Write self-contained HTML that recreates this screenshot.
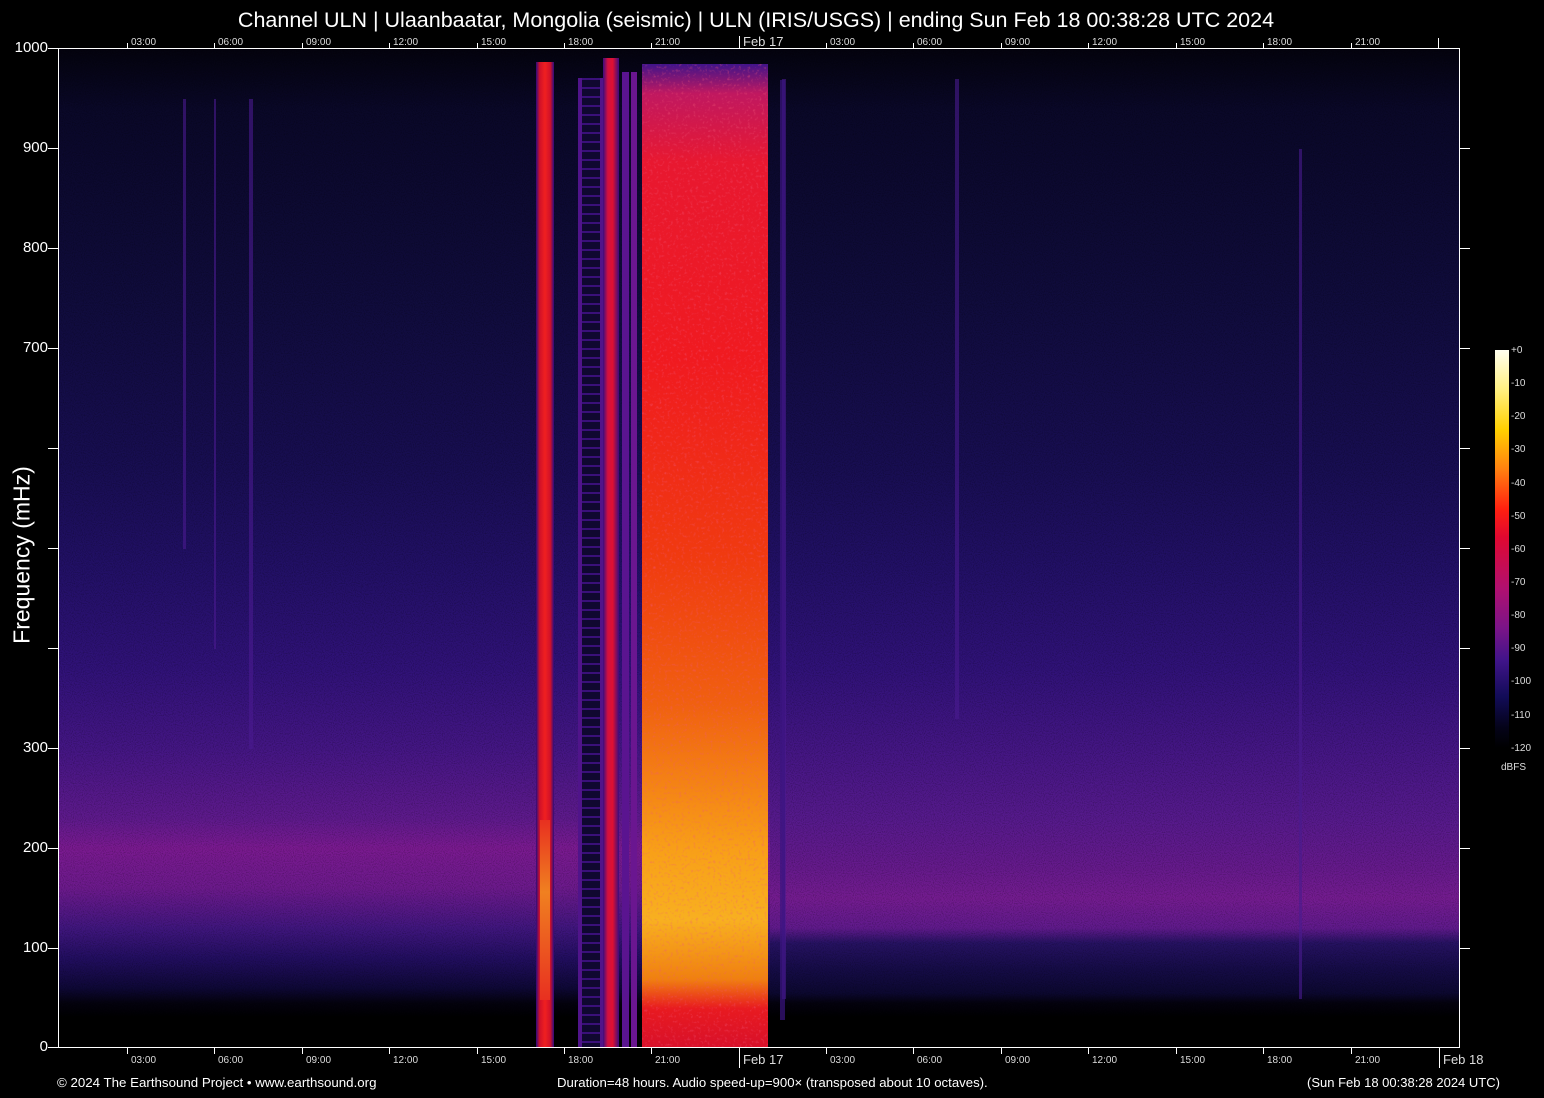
<!DOCTYPE html>
<html><head><style>
*{margin:0;padding:0}
body{width:1544px;height:1098px;background:#000;position:relative;overflow:hidden;font-family:"Liberation Sans",sans-serif;color:#fff}
.a{position:absolute}
.t{position:absolute;font-size:10px;color:#ddd}
.yl{position:absolute;font-size:15px;color:#fff;text-align:right;width:48px;left:0}
.cl{position:absolute;left:1511px;font-size:10px;color:#ddd}
</style></head><body>
<div class="a" style="left:0;top:8px;width:1512px;text-align:center;font-size:21.5px;white-space:nowrap">Channel ULN | Ulaanbaatar, Mongolia (seismic) | ULN (IRIS/USGS) | ending Sun Feb 18 00:38:28 UTC 2024</div>

<div class="a" style="left:59px;top:49px;width:711px;height:999px;background:linear-gradient(#04030e 0%,#0a0828 6%,#100c3c 25%,#180e52 42%,#221066 52%,#301278 62%,#441684 70%,#5e1a8c 77%,#7a1a90 80%,#6c1a8c 84%,#40167e 88%,#220e60 91%,#0e0836 94%,#04020e 95.5%,#000 97%,#000 100%)"></div>
<div class="a" style="left:770px;top:49px;width:689px;height:999px;background:linear-gradient(#04030e 0%,#0a0828 6%,#100c3c 25%,#180e52 42%,#221066 52%,#301278 62%,#441684 70%,#561a8c 77%,#661a8c 82%,#741c90 85%,#601a8c 88%,#261262 89.5%,#160c48 92%,#0c0830 94.5%,#04020e 95.5%,#000 97%,#000 100%)"></div>
<svg class="a" style="left:59px;top:49px" width="1400" height="999">
<filter id="n"><feTurbulence type="fractalNoise" baseFrequency="0.9" numOctaves="1" seed="3"/><feColorMatrix values="0 0 0 0 0  0 0 0 0 0  0 0 0 0 0  0 0 0 1.4 -0.6"/></filter>
<rect width="1400" height="999" filter="url(#n)" opacity="0.45"/>
<g fill="#4a1a90" opacity="0.6">
<rect x="124" y="50" width="3" height="450"/><rect x="190" y="50" width="4" height="650"/><rect x="896" y="30" width="4" height="640"/><rect x="1240" y="100" width="3" height="850"/><rect x="723" y="30" width="4" height="920"/><rect x="155" y="50" width="2" height="550"/>
</g>
</svg>

<div class="a" style="left:536px;top:62px;width:18px;height:986px;background:linear-gradient(90deg,#2a0c80,#d0102a 20%,#f02020 50%,#d0102a 80%,#2a0c80);"></div>
<div class="a" style="left:540px;top:820px;width:10px;height:180px;background:linear-gradient(#e83020,#f08020 40%,#e83020)"></div>
<div class="a" style="left:578px;top:78px;width:26px;height:970px;border-left:4px solid #50148a;border-right:4px solid #50148a;box-sizing:border-box;background:repeating-linear-gradient(#3a107a 0 2px,#100830 2px 9px)"></div>
<div class="a" style="left:603px;top:58px;width:16px;height:990px;background:linear-gradient(90deg,#3a0c80,#d01040 30%,#e01030 60%,#3a0c80)"></div>
<div class="a" style="left:622px;top:72px;width:7px;height:976px;background:#5a1490"></div>
<div class="a" style="left:631px;top:72px;width:6px;height:976px;background:#6a1690"></div>
<div class="a" style="left:642px;top:64px;width:126px;height:984px;background:linear-gradient(#40148a 0%,#c01860 3%,#e81830 10%,#f01a20 30%,#f03a10 50%,#f06010 65%,#f8a018 80%,#f8b020 87%,#f08010 93%,#e81a20 96%,#d8102a 100%)"></div>
<svg class="a" style="left:642px;top:64px" width="126" height="984"><filter id="m"><feTurbulence type="fractalNoise" baseFrequency="0.35" numOctaves="2" seed="7"/><feColorMatrix values="0 0 0 0 0.9  0 0 0 0 0.1  0 0 0 0 0.2  0 0 0 2 -1.1"/></filter><rect width="126" height="984" filter="url(#m)" opacity="0.6"/></svg>
<div class="a" style="left:780px;top:80px;width:5px;height:940px;background:#3a1480;opacity:.7"></div>

<div class="a" style="left:58px;top:48px;width:1402px;height:1000px;border:1px solid #fff;box-sizing:border-box"></div>
<svg class="a" style="left:0;top:0" width="1544" height="1098" stroke="#fff" stroke-width="1">
<path d="M48 48.5H58M48 148.5H58M48 248.5H58M48 348.5H58M48 448.5H58M48 548.5H58M48 648.5H58M48 748.5H58M48 848.5H58M48 948.5H58M48 1047.5H58"/>
<path d="M1460 148.5H1470M1460 248.5H1470M1460 348.5H1470M1460 448.5H1470M1460 548.5H1470M1460 648.5H1470M1460 748.5H1470M1460 848.5H1470M1460 948.5H1470"/>
<path d="M127.5 43V48M214.5 43V48M302.5 43V48M389.5 43V48M477.5 43V48M564.5 43V48M651.5 43V48M826.5 43V48M913.5 43V48M1001.5 43V48M1088.5 43V48M1176.5 43V48M1263.5 43V48M1351.5 43V48M1438.5 38V48M739.5 36V48"/>
<path d="M127.5 1048V1054M214.5 1048V1054M302.5 1048V1054M389.5 1048V1054M477.5 1048V1054M564.5 1048V1054M651.5 1048V1054M826.5 1048V1054M913.5 1048V1054M1001.5 1048V1054M1088.5 1048V1054M1176.5 1048V1054M1263.5 1048V1054M1351.5 1048V1054M739.5 1048V1068M1439.5 1048V1068"/>
</svg>
<div class="t" style="left:131px;top:37px">03:00</div><div class="t" style="left:218px;top:37px">06:00</div><div class="t" style="left:306px;top:37px">09:00</div><div class="t" style="left:393px;top:37px">12:00</div><div class="t" style="left:481px;top:37px">15:00</div><div class="t" style="left:568px;top:37px">18:00</div><div class="t" style="left:655px;top:37px">21:00</div><div class="t" style="left:743px;top:34px;font-size:13px">Feb 17</div><div class="t" style="left:830px;top:37px">03:00</div><div class="t" style="left:917px;top:37px">06:00</div><div class="t" style="left:1005px;top:37px">09:00</div><div class="t" style="left:1092px;top:37px">12:00</div><div class="t" style="left:1180px;top:37px">15:00</div><div class="t" style="left:1267px;top:37px">18:00</div><div class="t" style="left:1355px;top:37px">21:00</div>
<div class="t" style="left:131px;top:1055px">03:00</div><div class="t" style="left:218px;top:1055px">06:00</div><div class="t" style="left:306px;top:1055px">09:00</div><div class="t" style="left:393px;top:1055px">12:00</div><div class="t" style="left:481px;top:1055px">15:00</div><div class="t" style="left:568px;top:1055px">18:00</div><div class="t" style="left:655px;top:1055px">21:00</div><div class="t" style="left:743px;top:1052px;font-size:13px">Feb 17</div><div class="t" style="left:830px;top:1055px">03:00</div><div class="t" style="left:917px;top:1055px">06:00</div><div class="t" style="left:1005px;top:1055px">09:00</div><div class="t" style="left:1092px;top:1055px">12:00</div><div class="t" style="left:1180px;top:1055px">15:00</div><div class="t" style="left:1267px;top:1055px">18:00</div><div class="t" style="left:1355px;top:1055px">21:00</div><div class="t" style="left:1443px;top:1052px;font-size:13px">Feb 18</div>

<div class="yl" style="top:39px">1000</div><div class="yl" style="top:139px">900</div><div class="yl" style="top:239px">800</div><div class="yl" style="top:339px">700</div><div class="yl" style="top:739px">300</div><div class="yl" style="top:839px">200</div><div class="yl" style="top:939px">100</div><div class="yl" style="top:1038px">0</div>
<div class="a" style="left:22px;top:555px;transform:translate(-50%,-50%) rotate(-90deg);font-size:23px;white-space:nowrap">Frequency (mHz)</div>

<div class="a" style="left:1495px;top:350px;width:14px;height:398px;background:linear-gradient(#fffff0,#fff080 10%,#ffd000 20%,#ff8010 30%,#ff2010 40%,#e00830 47%,#b01070 60%,#7a1488 70%,#40148a 78%,#120c58 87%,#040318 95%,#000)"></div>
<div class="cl" style="top:345px">+0</div><div class="cl" style="top:378px">-10</div><div class="cl" style="top:411px">-20</div><div class="cl" style="top:444px">-30</div><div class="cl" style="top:478px">-40</div><div class="cl" style="top:511px">-50</div><div class="cl" style="top:544px">-60</div><div class="cl" style="top:577px">-70</div><div class="cl" style="top:610px">-80</div><div class="cl" style="top:643px">-90</div><div class="cl" style="top:676px">-100</div><div class="cl" style="top:710px">-110</div><div class="cl" style="top:743px">-120</div><div class="cl" style="left:1501px;top:762px">dBFS</div>

<div class="a" style="left:57px;top:1075px;font-size:13.3px;white-space:nowrap">© 2024 The Earthsound Project • www.earthsound.org</div>
<div class="a" style="left:557px;top:1075px;font-size:13.2px;white-space:nowrap">Duration=48 hours. Audio speed-up=900× (transposed about 10 octaves).</div>
<div class="a" style="left:1307px;top:1075px;font-size:13px;white-space:nowrap">(Sun Feb 18 00:38:28 2024 UTC)</div>
</body></html>
